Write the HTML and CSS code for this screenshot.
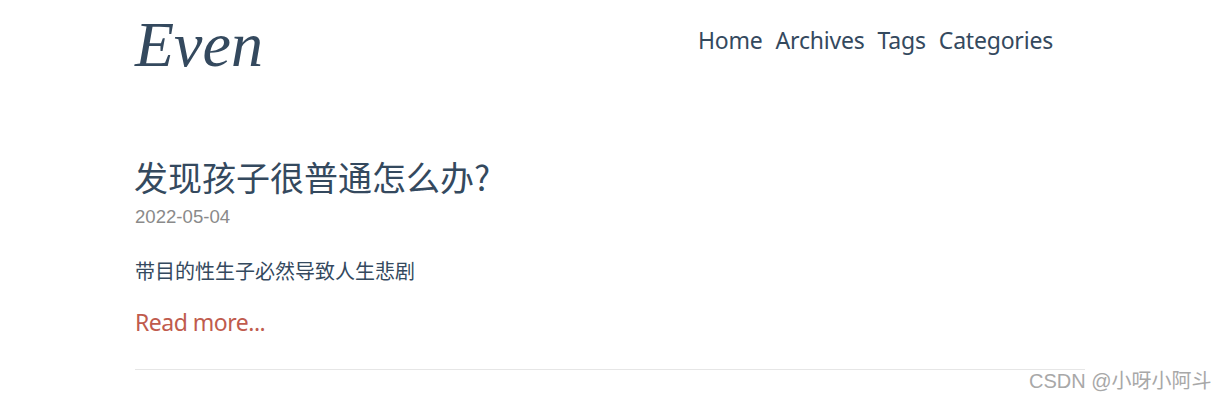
FILE: index.html
```html
<!DOCTYPE html>
<html lang="zh">
<head>
<meta charset="utf-8">
<title>Even</title>
<link rel="stylesheet" href="styles.css">
</head>
<body>
<div class="page">
  <header class="header">
    <a class="logo" href="#">Even</a>
    <nav class="nav">
      <a href="#">Home</a>
      <a href="#">Archives</a>
      <a href="#">Tags</a>
      <a href="#">Categories</a>
    </nav>
  </header>
  <article class="post">
    <h1 class="title">发现孩子很普通怎么办?</h1>
    <div class="date">2022-05-04</div>
    <p class="summary">带目的性生子必然导致人生悲剧</p>
    <a class="more" href="#">Read more...</a>
  </article>
</div>
<div class="watermark">CSDN @小呀小阿斗</div>
</body>
</html>
```
FILE: styles.css
```css
* { box-sizing: border-box; }
html, body { margin: 0; height: 400px; overflow: hidden; background: #fff; }
body {
  position: relative;
  color: #34495e;
  font-family: "Noto Sans", "Noto Sans CJK SC", sans-serif;
}
a { color: inherit; text-decoration: none; }
.page { width: 950px; margin-left: 135px; }
.header {
  display: flex;
  justify-content: space-between;
  align-items: flex-start;
  height: 149px;
  padding-right: 32px;
}
.logo {
  margin-top: 9px;
  font: italic 64px/72px "Liberation Serif", serif;
}
.nav {
  display: flex;
  gap: 13px;
  margin-top: 24px;
  font-size: 23px;
  letter-spacing: -0.2px;
  line-height: 33px;
}
.post { border-bottom: 1px solid #e6e6e6; height: 221px; }
.title {
  margin: 0 0 0 -1px;
  font-family: "Noto Sans CJK SC", sans-serif;
  font-size: 34px;
  font-weight: 400;
  line-height: 56px;
}
.date {
  font: 18.6px/24px "Liberation Sans", sans-serif;
  color: #8a8a8a;
}
.summary {
  margin: 27px 0 0;
  font: 20px/30px "Noto Sans CJK SC", sans-serif;
}
.more {
  display: block;
  margin-top: 20px;
  font-size: 23px;
  letter-spacing: -0.5px;
  line-height: 33px;
  color: #c05b4d;
}
.watermark {
  position: absolute;
  left: 1029px;
  top: 368px;
  font: 20px/26px "Liberation Sans", "Noto Sans CJK SC", sans-serif;
  color: #a8a8a8;
}
```
